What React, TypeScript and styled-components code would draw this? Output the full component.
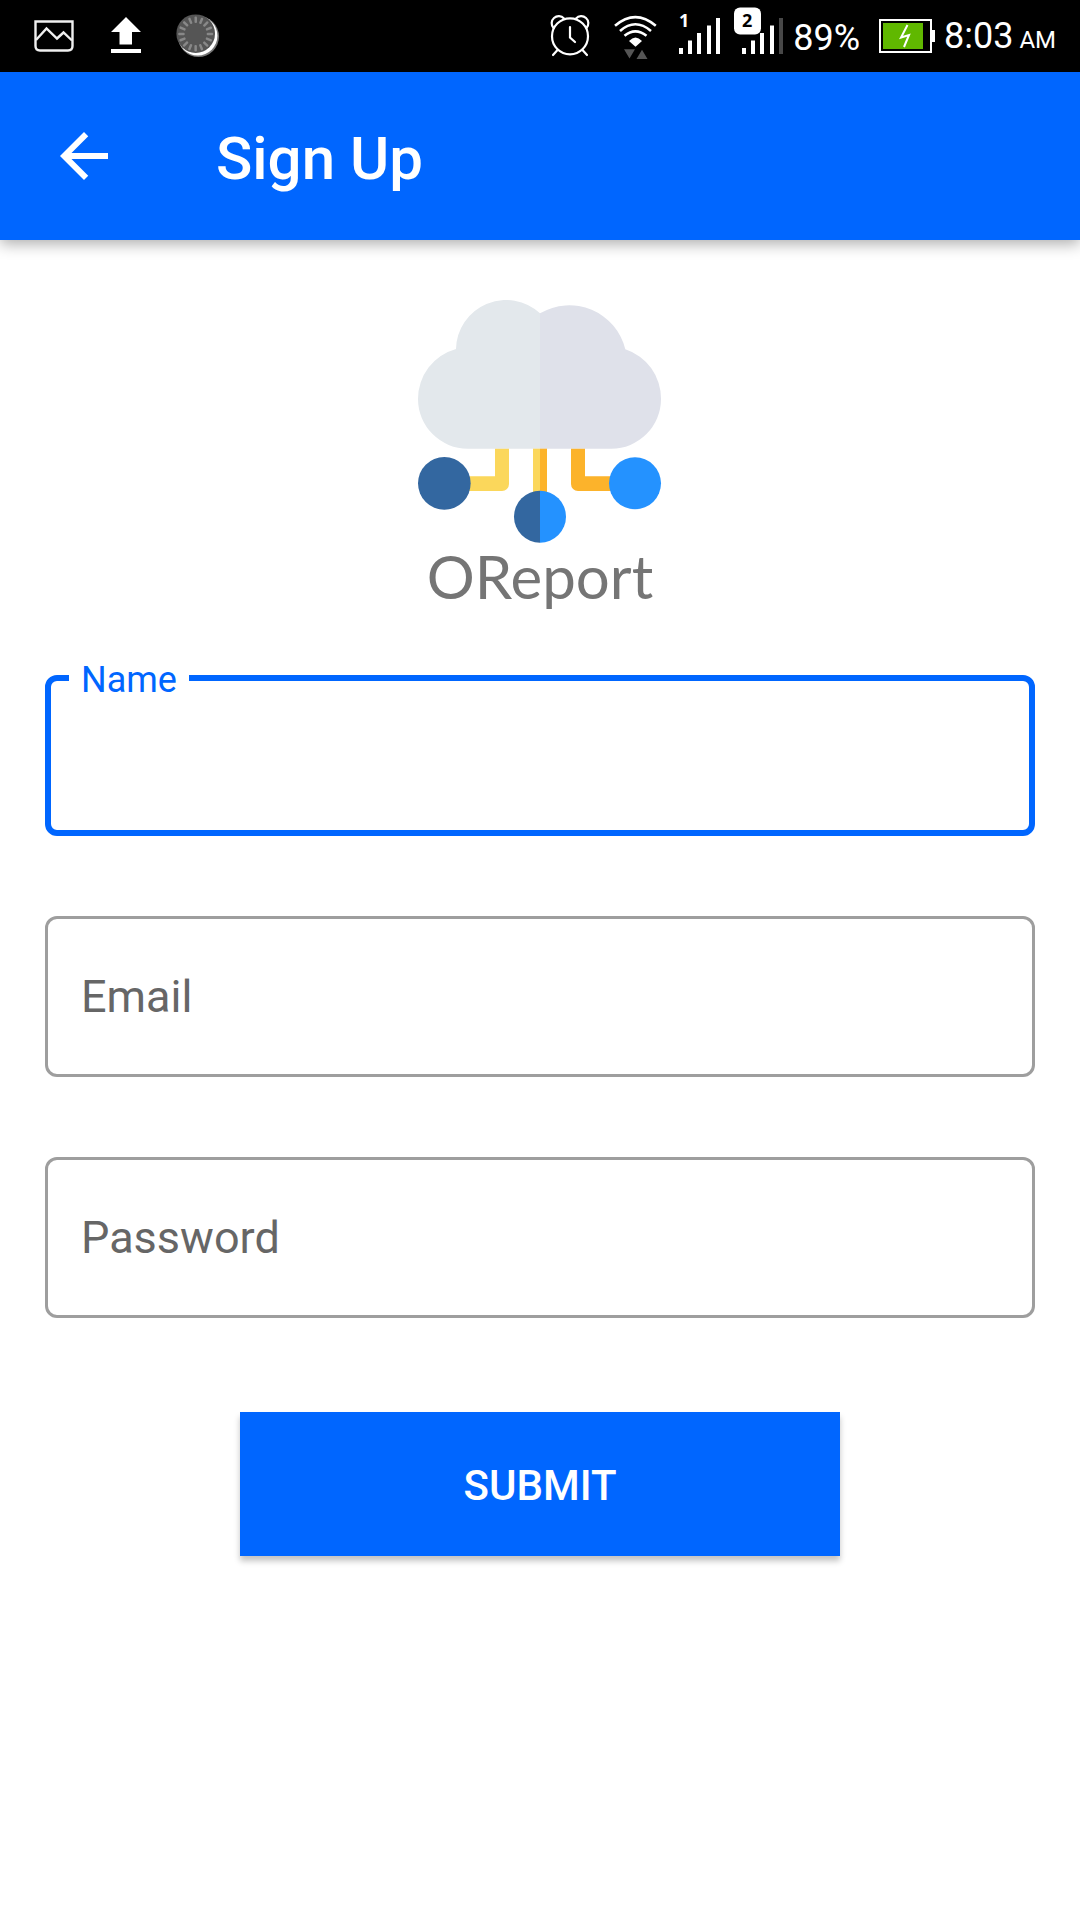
import React, { useState } from "react";
import styled, { createGlobalStyle } from "styled-components";

const BLUE = "#0066ff";

const GlobalStyle = createGlobalStyle`
  *, *::before, *::after { box-sizing: border-box; }
  body {
    margin: 0;
    background: #fff;
    font-family: Roboto, "Noto Sans", sans-serif;
  }
`;

const Screen = styled.div`
  display: flex;
  flex-direction: column;
  min-height: 100vh;
  background: #fff;
`;

const StatusBar = styled.header`
  display: flex;
  justify-content: space-between;
  height: 72px;
  padding: 0 24px 0 32px;
  background: #000;
  color: #fff;
`;

const StatusGroup = styled.div<{ $gap: number }>`
  display: flex;
  align-items: center;
  gap: ${(p) => p.$gap}px;
`;

const StatusIcon = styled.svg`
  display: block;
  flex: none;
  height: 72px;
`;

const StatusText = styled.span`
  padding-top: 4px;
  font-size: 36px;
  line-height: 44px;
  white-space: nowrap;
`;

const Meridiem = styled.small`
  font-size: 24px;
`;

const AppBar = styled.div`
  display: flex;
  align-items: center;
  gap: 96px;
  height: 168px;
  padding: 0 48px;
  background: ${BLUE};
  color: #fff;
  box-shadow: 0 4px 14px rgba(0, 0, 0, 0.32);
`;

const BackButton = styled.button`
  display: flex;
  padding: 0;
  border: 0;
  background: none;
  color: inherit;
  cursor: pointer;
`;

const Title = styled.h1`
  margin: 0;
  padding-top: 6px;
  font-size: 60px;
  font-weight: 500;
  line-height: 72px;
`;

const Content = styled.main`
  display: flex;
  flex-direction: column;
  align-items: center;
  padding: 60px 45px;
`;

const Brand = styled.div`
  display: flex;
  flex-direction: column;
  align-items: center;
  margin-bottom: 66px;
`;

const BrandName = styled.div`
  font-family: Lato, sans-serif;
  font-size: 60px;
  line-height: 66px;
  color: #757575;
`;

const Form = styled.form`
  display: flex;
  flex-direction: column;
  align-items: center;
  gap: 80px;
  width: 100%;
`;

const FieldBox = styled.div<{ $active: boolean }>`
  position: relative;
  width: 100%;
  height: 161px;
  border: ${(p) => (p.$active ? `6px solid ${BLUE}` : "3px solid #9e9e9e")};
  border-radius: 12px;
`;

const FieldInput = styled.input`
  width: 100%;
  height: 100%;
  padding: 0 32px;
  border: 0;
  outline: 0;
  border-radius: 8px;
  background: transparent;
  font: inherit;
  font-size: 45px;
  color: #212121;
`;

const FieldLabel = styled.label<{ $active: boolean; $floating: boolean }>`
  position: absolute;
  left: ${(p) => (p.$active ? 18 : 21)}px;
  top: ${(p) => (p.$floating ? "-23px" : "50%")};
  transform: ${(p) => (p.$floating ? "none" : "translateY(-50%)")};
  padding: 0 12px;
  background: #fff;
  font-size: ${(p) => (p.$floating ? 36 : 45)}px;
  line-height: ${(p) => (p.$floating ? 44 : 56)}px;
  color: ${(p) => (p.$active ? BLUE : "#666")};
  pointer-events: none;
`;

const SubmitButton = styled.button`
  width: 600px;
  max-width: 100%;
  height: 144px;
  margin-top: 14px;
  padding: 2px 0 0;
  border: 0;
  background: ${BLUE};
  color: #fff;
  font: inherit;
  font-size: 42px;
  font-weight: 500;
  box-shadow: 0 5px 6px rgba(0, 0, 0, 0.24);
  cursor: pointer;
`;

function PictureIcon() {
  return (
    <StatusIcon width="44" viewBox="32 0 44 72" fill="none" stroke="#f0f0f0" strokeWidth="2.400" aria-hidden="true">
      <path d="M35.5 21.5H72.5V46Q72.5 50.5 68 50.5H40Q35.5 50.5 35.5 46Z" />
      <path d="M36 40L46.5 28.5L57 38.5L63.5 32.5L72 40.5" />
    </StatusIcon>
  );
}

function UploadIcon() {
  return (
    <StatusIcon width="30" viewBox="111 0 30 72" fill="#fff" aria-hidden="true">
      <path d="M126 17L141 32H132V44.500H119.500V32H111Z" />
      <rect x="111" y="49" width="30" height="4" />
    </StatusIcon>
  );
}

function SpinnerIcon() {
  const spokes = Array.from({ length: 16 }, (_, i) => i * 22.5);
  return (
    <StatusIcon width="44" viewBox="176 0 44 72" aria-hidden="true">
      <circle cx="198.500" cy="36.500" r="20.500" fill="#777" />
      <circle cx="197.700" cy="35.700" r="19.700" fill="#fff" />
      <circle cx="195.700" cy="33.700" r="19.300" fill="#555" />
      {spokes.map((a) => (
        <rect key={a} x="194.500" y="16.500" width="2.500" height="6.500" rx="1" fill="#888" transform={`rotate(${a} 195.7 34)`} />
      ))}
    </StatusIcon>
  );
}

function AlarmIcon() {
  return (
    <StatusIcon width="42" viewBox="547 0 42 72" fill="none" stroke="#fff" strokeWidth="2.200" strokeLinecap="round" aria-hidden="true">
      <circle cx="568" cy="36.300" r="18" />
      <path d="M551.500 28A6.500 6.500 0 1 1 562 18.500M584.500 28A6.500 6.500 0 1 0 574 18.500" />
      <path d="M555.500 50L551 55M580.500 50L585 55" />
      <path d="M568 27V37.500L573 42" />
    </StatusIcon>
  );
}

function WifiIcon() {
  return (
    <StatusIcon width="44" viewBox="613 0 44 72" aria-hidden="true">
      <g fill="none" stroke="#fff" strokeWidth="2.600">
        <path d="M615 25.800Q635.300 8.500 655.800 25.800" />
        <path d="M620 31Q635.300 17.500 651 31" />
        <path d="M624.500 35.800Q635.300 27 646.500 35.800" />
      </g>
      <path d="M629 41Q635.500 34 642 41L635.500 46.800Z" fill="#fff" />
      <path d="M624 49.300H635L629.500 58.500ZM636.500 59H647.500L642 49.700Z" fill="#555" />
    </StatusIcon>
  );
}

const BarDigit = styled.text`
  font-family: "Open Sans", sans-serif;
  font-size: 18px;
  font-weight: 700;
`;

function SignalOneIcon() {
  return (
    <StatusIcon width="42" viewBox="678 0 42 72" fill="#fff" role="img" aria-label="SIM 1 signal">
      <BarDigit x="678" y="27">1</BarDigit>
      <path d="M678 48h4v6h-4zM687 40.500h4v13.500h-4zM696 33h4v21h-4zM706 25.500h4v28.500h-4zM715 18h4v36h-4z" />
    </StatusIcon>
  );
}

function SignalTwoIcon() {
  return (
    <StatusIcon width="54" viewBox="729 0 54 72" fill="#fff" role="img" aria-label="SIM 2 signal">
      <path d="M741 48h4v6h-4zM750 40.500h4v13.500h-4zM759 33h4v21h-4zM769 25.500h4v28.500h-4z" />
      <path d="M778 18h4v36h-4z" fill="#484848" />
      <rect x="733" y="7.500" width="27" height="27" rx="6" />
      <BarDigit x="741" y="27" fill="#000">2</BarDigit>
    </StatusIcon>
  );
}

function BatteryIcon() {
  return (
    <StatusIcon width="56" viewBox="879 0 56 72" role="img" aria-label="Battery charging">
      <rect x="880" y="20" width="51" height="32" fill="none" stroke="#fff" strokeWidth="2" />
      <rect x="932" y="30" width="3" height="12" fill="#fff" />
      <rect x="883" y="23" width="40" height="26" fill="#60b800" />
      <path d="M907.500 25L901 37.500L909 35L904 47" fill="none" stroke="#fff" strokeWidth="2" />
    </StatusIcon>
  );
}

function ArrowBack() {
  return (
    <svg width="72" height="72" viewBox="0 0 24 24" fill="currentColor" aria-hidden="true">
      <path d="M20 11H7.830l5.590-5.590L12 4l-8 8 8 8 1.410-1.410L7.830 13H20v-2z" />
    </svg>
  );
}

function CloudLogo() {
  return (
    <svg width="244" height="243" viewBox="54 60 732 729" aria-hidden="true">
      <path d="M420 506H203A149 149 0 0 1 54 357A155 155 0 0 1 168 207A150 150 0 0 1 420 100Z" fill="#e3e8ec" />
      <path d="M420 506H634A149 149 0 0 0 783 357A155 155 0 0 0 676 208A173 173 0 0 0 420 100Z" fill="#dfe1ea" />
      <path d="M285 506H327V612A21 21 0 0 1 306 633H205V589H285Z" fill="#fbd75b" />
      <path d="M399 506H420V640H399Z" fill="#fbd75b" />
      <path d="M420 506H441V640H420Z" fill="#fcb32b" />
      <path d="M513 506H555V589H635V633H534A21 21 0 0 1 513 612Z" fill="#fcb32b" />
      <circle cx="133" cy="610" r="79" fill="#3367a0" />
      <circle cx="705" cy="610" r="78" fill="#2492ff" />
      <path d="M420 632A78 78 0 0 0 420 788Z" fill="#3367a0" />
      <path d="M420 632A78 78 0 0 1 420 788Z" fill="#2492ff" />
    </svg>
  );
}

interface FieldProps {
  id: string;
  label: string;
  type: string;
  active: boolean;
  onActivate: (id: string) => void;
}

function Field({ id, label, type, active, onActivate }: FieldProps) {
  const [value, setValue] = useState("");
  const floating = active || value !== "";
  return (
    <FieldBox $active={active}>
      <FieldInput
        id={id}
        name={id}
        type={type}
        value={value}
        onChange={(e) => setValue(e.target.value)}
        onFocus={() => onActivate(id)}
      />
      <FieldLabel htmlFor={id} $active={active} $floating={floating}>
        {label}
      </FieldLabel>
    </FieldBox>
  );
}

const FIELDS = [
  { id: "name", label: "Name", type: "text" },
  { id: "email", label: "Email", type: "email" },
  { id: "password", label: "Password", type: "password" },
];

export default function App() {
  const [activeField, setActiveField] = useState("name");
  return (
    <Screen>
      <GlobalStyle />
      <StatusBar>
        <StatusGroup $gap={35}>
          <PictureIcon />
          <UploadIcon />
          <SpinnerIcon />
        </StatusGroup>
        <StatusGroup $gap={9}>
          <StatusGroup $gap={22}>
            <AlarmIcon />
            <WifiIcon />
            <SignalOneIcon />
          </StatusGroup>
          <SignalTwoIcon />
          <StatusGroup $gap={19}>
            <StatusText>89%</StatusText>
            <BatteryIcon />
          </StatusGroup>
          <StatusText>
            8:03<Meridiem> AM</Meridiem>
          </StatusText>
        </StatusGroup>
      </StatusBar>
      <AppBar>
        <BackButton type="button" aria-label="Back">
          <ArrowBack />
        </BackButton>
        <Title>Sign Up</Title>
      </AppBar>
      <Content>
        <Brand>
          <CloudLogo />
          <BrandName>OReport</BrandName>
        </Brand>
        <Form onSubmit={(e) => e.preventDefault()}>
          {FIELDS.map((f) => (
            <Field key={f.id} {...f} active={activeField === f.id} onActivate={setActiveField} />
          ))}
          <SubmitButton type="submit">SUBMIT</SubmitButton>
        </Form>
      </Content>
    </Screen>
  );
}
